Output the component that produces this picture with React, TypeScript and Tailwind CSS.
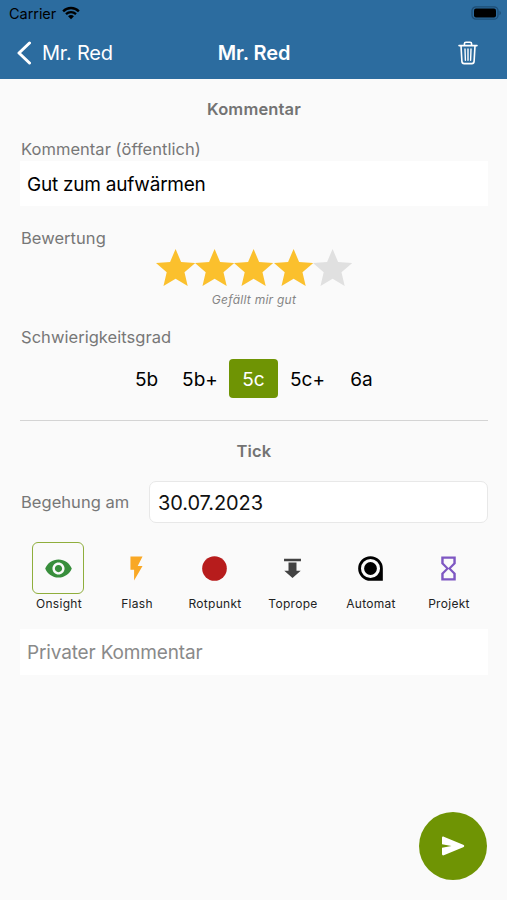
import type { ReactNode } from "react";

const STAR =
  "M12 17.27L18.18 21l-1.64-7.03L22 9.24l-7.19-.61L12 2 9.19 8.63 2 9.24l5.46 4.73L5.82 21z";

function StatusBar() {
  return (
    <div className="flex h-[26px] items-center pl-[9px] pr-[5px] text-black">
      <span className="pt-px text-[14.5px] leading-[26px] tracking-[-0.05px]">Carrier</span>
      <svg className="ml-[6px] h-[14px] w-[18px]" viewBox="0 0 19 14" fill="none" stroke="currentColor">
        <path d="M1.2 5.2C5.8.6 13.2.6 17.8 5.2" strokeWidth="2.5" />
        <path d="M4.2 8.2c3-2.9 7.6-2.9 10.6 0" strokeWidth="2.4" />
        <path d="M9.5 13.6L6.4 10.4c1.8-1.6 4.4-1.6 6.2 0z" fill="currentColor" stroke="none" />
      </svg>
      <svg className="ml-auto h-[14px] w-[31px]" viewBox="0 0 31 14">
        <rect x="1" y="0.8" width="26" height="12.4" rx="4" fill="none" stroke="#1d4d75" strokeWidth="1.3" />
        <rect x="3" y="2.6" width="22" height="8.8" rx="2" fill="#000" />
        <path d="M28.5 4.8c1.8.8 1.8 3.6 0 4.4z" fill="#1d4d75" />
      </svg>
    </div>
  );
}

function NavBar() {
  return (
    <div className="grid h-[53px] grid-cols-[1fr_auto_1fr] items-center pl-[16px] pr-[29px] text-white">
      <div className="flex items-center">
        <svg className="h-[24px] w-[15px]" viewBox="0 0 15 24" fill="none" stroke="currentColor" strokeWidth="3" strokeLinecap="round" strokeLinejoin="round">
          <path d="M13.5 2L3 12 13.5 22" />
        </svg>
        <span className="ml-[11px] text-[20px] leading-[24px] tracking-[-0.2px]">Mr. Red</span>
      </div>
      <span className="ml-[14px] text-[20px] font-semibold leading-[24px] tracking-[-0.1px]">Mr. Red</span>
      <svg className="h-[24px] w-[20px] justify-self-end" viewBox="0 0 20 24" fill="none" stroke="currentColor" strokeWidth="1.6" strokeLinecap="round" strokeLinejoin="round">
        <path d="M1 4.6h18M6.4 4.4V2.8c0-1 .6-1.6 1.6-1.6h4c1 0 1.6.6 1.6 1.6v1.6M3 4.8l.9 15.6c.1 1.5.8 2.2 2.2 2.2h7.8c1.4 0 2.1-.7 2.2-2.2L17 4.8" />
        <path d="M7 8l.4 11.3M10 8v11.3M13 8l-.4 11.3" strokeWidth="1.4" />
      </svg>
    </div>
  );
}

function Label({ children }: { children: ReactNode }) {
  return <div className="pl-px text-[16.5px] leading-[24px] tracking-[0.04px] text-[#777]">{children}</div>;
}

function Heading({ children }: { children: ReactNode }) {
  return (
    <h2 className="text-center text-[16.5px] font-semibold leading-[24px] tracking-[0.15px] text-[#737373]">{children}</h2>
  );
}

const grades = [
  { name: "5b", box: "w-[49px] text-black" },
  { name: "5b+", box: "w-[58px] text-black" },
  { name: "5c", box: "w-[49px] bg-[#6f9404] text-white" },
  { name: "5c+", box: "w-[59px] text-black" },
  { name: "6a", box: "w-[49px] text-black" },
];

const ticks = [
  {
    name: "Onsight",
    box: "border-[#8fae3c]",
    icon: (
      <path
        fill="#388e3c"
        d="M12 4.5C7 4.5 2.73 7.61 1 12c1.73 4.39 6 7.5 11 7.5s9.27-3.11 11-7.5c-1.73-4.39-6-7.5-11-7.5zM12 17c-2.76 0-5-2.24-5-5s2.24-5 5-5 5 2.24 5 5-2.24 5-5 5zm0-8c-1.66 0-3 1.34-3 3s1.34 3 3 3 3-1.34 3-3-1.34-3-3-3z"
      />
    ),
  },
  {
    name: "Flash",
    box: "border-transparent",
    icon: <path fill="#f9a825" d="M7 2v11h3v9l7-12h-4l4-8z" />,
  },
  {
    name: "Rotpunkt",
    box: "border-transparent",
    icon: <circle cx="12" cy="12" r="10.2" fill="#b71c1c" />,
  },
  {
    name: "Toprope",
    box: "border-transparent",
    icon: <path fill="#424242" d="M5 4h14v2H5zM8.700 7h6.600v6.800h3.500l-6.800 6-6.800-6h3.500z" />,
  },
  {
    name: "Automat",
    box: "border-transparent",
    icon: (
      <>
        <path fill="#000" d="M12 1.8a10.2 10.2 0 1 0 0 20.4h10.2V12A10.2 10.2 0 0 0 12 1.8z" />
        <circle cx="12" cy="12" r="6.6" fill="none" stroke="#fafafa" strokeWidth="2.6" />
      </>
    ),
  },
  {
    name: "Projekt",
    box: "border-transparent",
    icon: (
      <path
        fill="#7e57c2"
        d="M6 2v6l4 4-4 4v6h12v-6l-4-4 4-4V2H6zm10 14.5V20H8v-3.5l4-4 4 4zm-4-5l-4-4V4h8v3.5l-4 4z"
      />
    ),
  },
];

export default function App() {
  return (
    <div className="relative h-[900px] w-[507px] overflow-hidden bg-[#fafafa] font-[Inter,'Liberation_Sans',sans-serif]">
      <header className="h-[79px] bg-[#2c6c9f]">
        <StatusBar />
        <NavBar />
      </header>

      <main className="flex flex-col pl-[20px] pr-[19px] pt-[18px]">
        <Heading>Kommentar</Heading>
        <div className="mt-[16px]">
          <Label>Kommentar (öffentlich)</Label>
        </div>
        <div className="h-[45px] bg-white px-[7px] text-[19px] leading-[47px] tracking-[-0.23px] text-black">
          Gut zum aufwärmen
        </div>

        <div className="mt-[20px] h-[23px]">
          <Label>Bewertung</Label>
        </div>
        <div className="flex justify-center">
          {[1, 2, 3, 4, 5].map((n) => (
            <svg key={n} className="h-[37px] w-[39.2px]" viewBox="2 2 20 19" preserveAspectRatio="none">
              <path d={STAR} fill={n <= 4 ? "#fbc02d" : "#e0e0e0"} />
            </svg>
          ))}
        </div>
        <div className="mt-[6px] text-center text-[12px] italic leading-[16px] tracking-[0.25px] text-[#858585]">
          Gefällt mir gut
        </div>

        <div className="mt-[17px]">
          <Label>Schwierigkeitsgrad</Label>
        </div>
        <div className="mt-[10px] flex justify-center">
          {grades.map((g) => (
            <div key={g.name} className={"h-[39px] rounded-[4px] text-center text-[19px] leading-[41px] " + g.box}>
              {g.name}
            </div>
          ))}
        </div>

        <div className="mt-[22px] h-px bg-[#d4d4d4]" />

        <div className="mt-[18px]">
          <Heading>Tick</Heading>
        </div>
        <div className="mt-[18px] flex items-center">
          <div className="w-[129px]">
            <Label>Begehung am</Label>
          </div>
          <div className="h-[42px] flex-1 rounded-[7px] border border-[#e8e8e8] bg-white px-[8px] text-[20px] leading-[42px] tracking-[-0.1px] text-[#111]">
            30.07.2023
          </div>
        </div>

        <div className="mt-[19px] grid grid-cols-6">
          {ticks.map((t) => (
            <div key={t.name} className="flex flex-col items-center">
              <div className={"mr-[2px] flex h-[52px] w-[52px] items-center justify-center rounded-[6px] border " + t.box}>
                <svg className="h-[29px] w-[29px]" viewBox="0 0 24 24">
                  {t.icon}
                </svg>
              </div>
              <span className="mt-[2px] text-[12px] leading-[16px] tracking-[0.3px] text-[#222]">{t.name}</span>
            </div>
          ))}
        </div>

        <div className="mt-[17px] h-[46px] bg-white px-[7px] text-[19px] leading-[47px] tracking-[-0.15px] text-[#8a8a8a]">
          Privater Kommentar
        </div>
      </main>

      <button className="absolute bottom-[20px] right-[20px] flex h-[68px] w-[68px] items-center justify-center rounded-full bg-[#6f9404]">
        <svg className="h-[20px] w-[24px]" viewBox="0 0 24 20" fill="#fff">
          <path d="M1 1.9C1 .8 1.9.3 2.8.7l19.400 8c1.400.6 1.400 2 0 2.600l-19.400 8c-.9.4-1.800-.1-1.800-1.200v-6.300L10.500 10 1 8.200z" />
        </svg>
      </button>
    </div>
  );
}
